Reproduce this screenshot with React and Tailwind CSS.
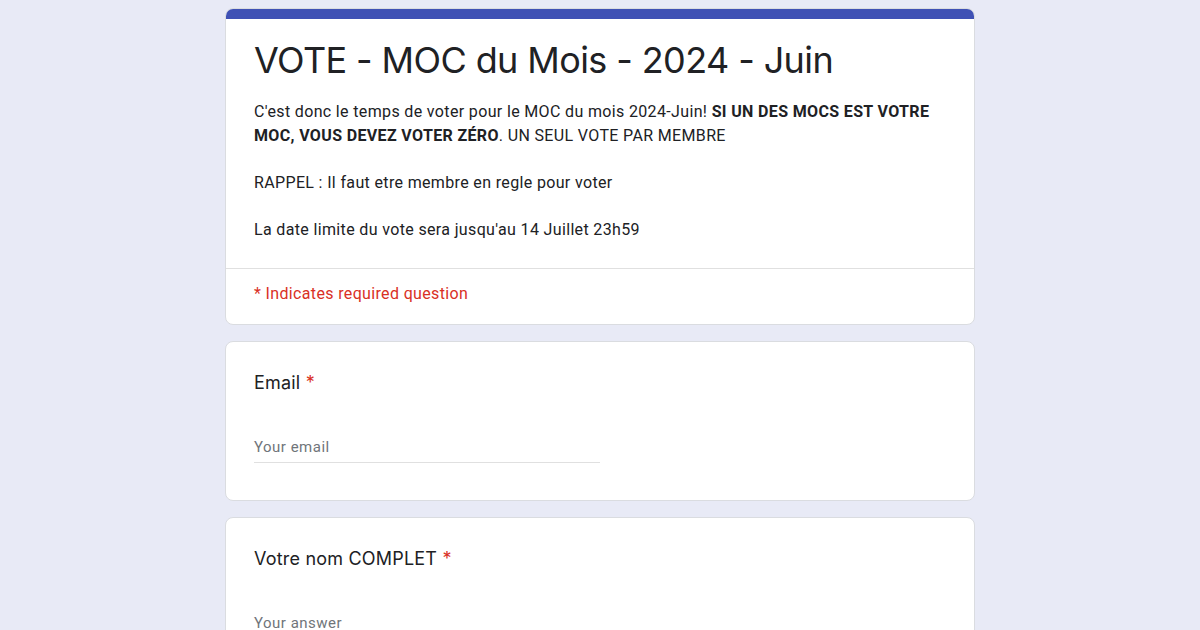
import React from 'react';

const sans = { fontFamily: 'Roboto, "Liberation Sans", sans-serif' };

function Card({ children, top = false }) {
    return (
        <div className="bg-white rounded-lg border border-[#dadce0] overflow-hidden">
            {top && <div className="h-[10px] bg-[#3f51b5]" />}
            {children}
        </div>
    );
}

function Question({ label, placeholder }) {
    return (
        <Card>
            <div className="px-[28px] pt-[29px] pb-[37px]">
                <div className="text-[18px] leading-6 text-[#202124] font-['Inter',sans-serif] tracking-[0.2px]">
                    {label} <span className="text-[#d93025]">*</span>
                </div>
                <div className="mt-[40px] w-1/2 border-b border-[#e0e0e0] pb-[3px] text-[15px] leading-6 text-[#70757a] font-['Roboto',sans-serif] tracking-[0.5px]">
                    {placeholder}
                </div>
            </div>
        </Card>
    );
}

export default function App() {
    return (
        <div className="min-h-screen bg-[#e8eaf6] pt-[8px]" style={sans}>
            <div className="w-[750px] flex flex-col gap-[16px]" style={{ marginLeft: 225 }}>
                <Card top>
                    <div className="px-[28px] pt-[17px] pb-[27px] border-b border-[#e0e0e0]">
                        <h1 className="text-[36px] leading-[48px] text-[#202124] font-['Inter',sans-serif] tracking-[-0.6px]">
                            VOTE - MOC du Mois - 2024 - Juin
                        </h1>
                        <div className="mt-[16px] text-[16px] leading-[23.5px] text-[#202124] tracking-[0.35px]">
                            <p>
                                C'est donc le temps de voter pour le MOC du mois 2024-Juin!{' '}
                                <b className="font-bold">SI UN DES MOCS EST VOTRE MOC, VOUS DEVEZ VOTER ZÉRO</b>. UN SEUL VOTE PAR MEMBRE
                            </p>
                            <p className="mt-[23.5px]">RAPPEL : Il faut etre membre en regle pour voter</p>
                            <p className="mt-[23.5px]">La date limite du vote sera jusqu'au 14 Juillet 23h59</p>
                        </div>
                    </div>
                    <div className="px-[28px] pt-[14px] pb-[19px] text-[16px] leading-[22px] text-[#d93025] tracking-[0.35px]">
                        * Indicates required question
                    </div>
                </Card>
                <Question label="Email" placeholder="Your email" />
                <Question label="Votre nom COMPLET" placeholder="Your answer" />
            </div>
        </div>
    );
}
